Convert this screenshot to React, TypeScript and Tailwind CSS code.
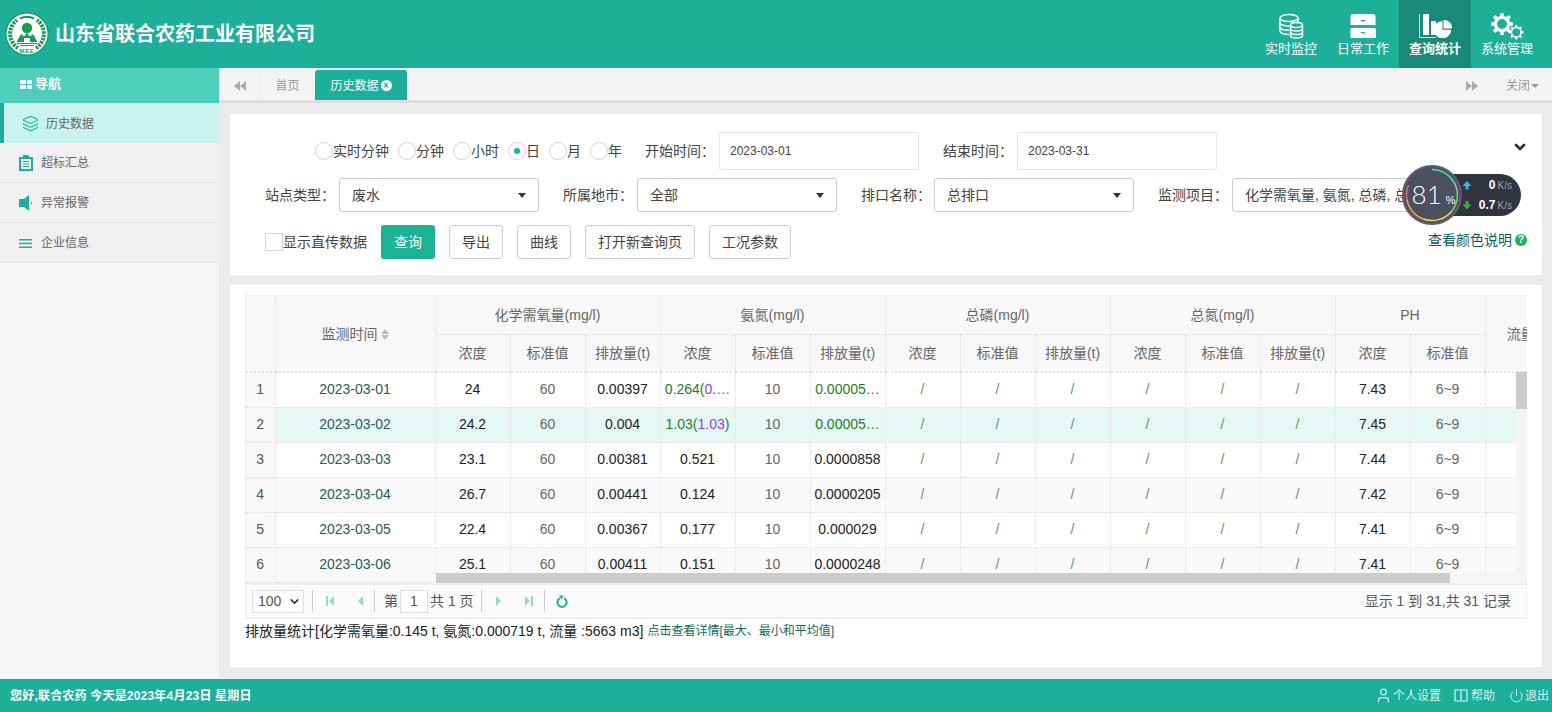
import React from 'react';
import { Layers, User, Power, ChevronDown } from 'lucide-react';

type Row = { no: number; date: string; cod: string; codOut: string; nh: React.ReactNode; nhOut: string; ph: string; stripe?: boolean; hover?: boolean };

const rows: Row[] = [
  { no: 1, date: '2023-03-01', cod: '24', codOut: '0.00397', nh: <><span className="text-[#1d801d]">0.264(</span><span className="text-[#8a3ff0]">0.…</span></>, nhOut: '0.00005…', ph: '7.43' },
  { no: 2, date: '2023-03-02', cod: '24.2', codOut: '0.004', nh: <><span className="text-[#1d801d]">1.03(</span><span className="text-[#8a3ff0]">1.03</span><span className="text-[#1d801d]">)</span></>, nhOut: '0.00005…', ph: '7.45', hover: true },
  { no: 3, date: '2023-03-03', cod: '23.1', codOut: '0.00381', nh: '0.521', nhOut: '0.0000858', ph: '7.44' },
  { no: 4, date: '2023-03-04', cod: '26.7', codOut: '0.00441', nh: '0.124', nhOut: '0.0000205', ph: '7.42', stripe: true },
  { no: 5, date: '2023-03-05', cod: '22.4', codOut: '0.00367', nh: '0.177', nhOut: '0.000029', ph: '7.41' },
  { no: 6, date: '2023-03-06', cod: '25.1', codOut: '0.00411', nh: '0.151', nhOut: '0.0000248', ph: '7.41', stripe: true },
];

const th = 'border-r border-b border-dotted border-[#dddddd] font-normal text-[#666] text-[14px] p-0 pt-[2px] whitespace-nowrap';
const thEnd = 'border-b-2 border-b-[#e5e5e5] border-b-solid';
const td = 'border-r border-b border-dotted border-[#dddddd] text-center text-[14px] p-0 h-[35px] whitespace-nowrap overflow-hidden';

const Logo = () => (
  <svg viewBox="0 0 44 44" className="w-11 h-11">
    <circle cx="22" cy="22" r="21.2" fill="#ffffff" stroke="#169c55" strokeWidth="1.4" />
    <g fill="none" stroke="#169c55" strokeWidth="4" strokeDasharray="2.4 1">
      <path d="M13 36 A17 17 0 0 1 12 8" />
      <path d="M31 36 A17 17 0 0 0 32 8" />
    </g>
    <path d="M15 6.5 A17 17 0 0 1 29 6.5" fill="none" stroke="#169c55" strokeWidth="2.2" />
    <circle cx="22" cy="16" r="5.2" fill="#169c55" />
    <path d="M11.5 30 L16 22 L19 24.5 L22 21 L25 24.5 L28 22 L32.5 30 Z" fill="#169c55" />
    <path d="M19 26 H25 V30 H19 Z" fill="#ffffff" />
    <path d="M12 31.5 H32 M15 33.5 H29" stroke="#169c55" strokeWidth="1" />
    <text x="22" y="41" textAnchor="middle" fontSize="6" fontWeight="700" letterSpacing="0.6" fontFamily="Liberation Sans" fill="#169c55">MEE</text>
  </svg>
);

const DbIcon = () => (
  <svg viewBox="0 0 26 26" className="w-[26px] h-[26px]" fill="none" stroke="#fff" strokeWidth="1.5">
    <ellipse cx="11" cy="5" rx="9" ry="3.5" />
    <path d="M2 5 V18 C2 20 6 21.5 11 21.5 M2 9.5 C2 11.5 6 13 12 13 M2 14 C2 16 6 17.2 11 17.2 M20 5 V9" />
    <ellipse cx="18.5" cy="12" rx="6" ry="2.5" fill="#1cb09a" />
    <path d="M12.5 12 V22 C12.5 24 15.5 25 18.5 25 S24.5 24 24.5 22 V12 M12.5 15.5 C12.5 17 15.5 18 18.5 18 S24.5 17 24.5 15.5 M12.5 19 C12.5 20.5 15.5 21.5 18.5 21.5 S24.5 20.5 24.5 19" />
  </svg>
);

const DrawerIcon = () => (
  <svg viewBox="0 0 26 24" className="w-[26px] h-6" fill="#fff">
    <path d="M3 0 H23 Q25.5 0 25.5 3 V11 H0.5 V3 Q0.5 0 3 0 Z" />
    <rect x="0.5" y="14" width="25.5" height="10" rx="1.5" />
    <rect x="11" y="6" width="4" height="1.4" fill="#1cb09a" />
    <rect x="11" y="18" width="4" height="1.4" fill="#1cb09a" />
  </svg>
);

const StatsIcon = () => (
  <svg viewBox="0 0 33 24" className="w-[33px] h-6" fill="#fff">
    <path d="M0.5 0 V23.5 H17" fill="none" stroke="#fff" strokeWidth="0.8" />
    <rect x="4" y="0" width="6" height="21" />
    <rect x="12" y="7" width="5" height="14" />
    <path d="M23.5 7 A8.7 8.7 0 1 0 32.2 15.7 H23.5 Z" />
    <path d="M24.5 6 A8 8 0 0 1 33 14.5 H24.5 Z" />
  </svg>
);

const gearPath = 'M9.5 0 H12.5 L13 3 L15.2 3.9 L17.7 2.1 L19.9 4.3 L18.1 6.8 L19 9 L22 9.5 V12.5 L19 13 L18.1 15.2 L19.9 17.7 L17.7 19.9 L15.2 18.1 L13 19 L12.5 22 H9.5 L9 19 L6.8 18.1 L4.3 19.9 L2.1 17.7 L3.9 15.2 L3 13 L0 12.5 V9.5 L3 9 L3.9 6.8 L2.1 4.3 L4.3 2.1 L6.8 3.9 L9 3 Z';

const GearsIcon = () => (
  <svg viewBox="0 0 33 27" className="w-[33px] h-[27px]">
    <path d={gearPath} fill="#fff" />
    <circle cx="11" cy="11" r="5" fill="#1cb09a" />
    <g transform="translate(18 12) scale(0.66)">
      <path d={gearPath} fill="#fff" />
      <circle cx="11" cy="11" r="6" fill="#1cb09a" />
    </g>
  </svg>
);

const nav = [
  { label: '实时监控', icon: <DbIcon /> },
  { label: '日常工作', icon: <DrawerIcon /> },
  { label: '查询统计', icon: <StatsIcon />, active: true },
  { label: '系统管理', icon: <GearsIcon /> },
];

const Caret = () => <span className="w-0 h-0 shrink-0 border-x-[4px] border-x-transparent border-t-[5px] border-t-[#333]" />;

const Radio = ({ label, on }: { label: string; on?: boolean }) => (
  <label className="flex items-center">
    <span className="w-[18px] h-[18px] rounded-full border border-[#d5d5d5] bg-white flex items-center justify-center">
      {on && <span className="w-[6px] h-[6px] rounded-full bg-[#17b3a3]" />}
    </span>
    <span>{label}</span>
  </label>
);

const Select = ({ value, width }: { value: string; width: string }) => (
  <div className={`h-[34px] bg-white border border-[#cccccc] rounded-[3px] pl-3 pr-3 flex items-center justify-between text-[14px] text-[#444] ${width}`}>
    <span className="whitespace-nowrap overflow-hidden">{value}</span>
    <Caret />
  </div>
);

const Btn = ({ children, primary }: { children: React.ReactNode; primary?: boolean }) => (
  <button className={`h-[34px] rounded-[3px] text-[14px] ${primary ? 'px-[13px] bg-[#1ab394] text-white' : 'px-[12px] bg-white border border-[#cccccc] text-[#444]'}`}>
    {children}
  </button>
);

const PagerIcon = ({ d }: { d: string }) => (
  <svg viewBox="0 0 12 14" className="w-3 h-[14px]" fill="#93d9cd"><path d={d} /></svg>
);

const Gauge = () => (
  <div className="absolute left-[1172px] top-[51px] w-[119px] h-[60px]">
    <div className="absolute right-0 top-[9px] w-[90px] h-[42px] rounded-[21px] bg-[#31343f] text-white">
      <svg viewBox="0 0 10 10" className="absolute left-[31px] top-[6px] w-[10px] h-[10px]" fill="#3db4ef"><path d="M5 1 L9.5 6 H6.5 V9.5 H3.5 V6 H0.5 Z" /></svg>
      <div className="absolute right-[9px] top-[3px] leading-[16px] flex items-baseline gap-[2px] text-[12px] font-bold">
        0<span className="text-[10px] font-normal text-[#a0a3ad]">K/s</span>
      </div>
      <svg viewBox="0 0 10 10" className="absolute left-[31px] top-[26px] w-[10px] h-[10px]" fill="#35b035"><path d="M5 9.5 L9.5 4.5 H6.5 V1 H3.5 V4.5 H0.5 Z" /></svg>
      <div className="absolute right-[9px] top-[23px] leading-[16px] flex items-baseline gap-[2px] text-[12px] font-bold">
        0.7<span className="text-[10px] font-normal text-[#a0a3ad]">K/s</span>
      </div>
    </div>
    <div className="absolute left-0 top-0 w-[60px] h-[60px] rounded-full bg-[#4c4f5d] border-[2px] border-[#5d606c] flex items-center justify-center text-white">
      <svg viewBox="0 0 56 56" className="absolute inset-0 w-full h-full" fill="none" strokeWidth="1.5">
        <path d="M28 2.5 A25.5 25.5 0 0 1 50 15.25" stroke="#3fd8c2" />
        <path d="M50 15.25 A25.5 25.5 0 0 1 47.5 44.4" stroke="#7ed67c" />
        <path d="M47.5 44.4 A25.5 25.5 0 0 1 19.3 52" stroke="#f0dc4e" />
        <path d="M19.3 52 A25.5 25.5 0 0 1 2.9 32.4" stroke="#f0a848" />
        <path d="M2.9 32.4 A25.5 25.5 0 0 1 4.5 18" stroke="#ee6a4e" />
      </svg>
      <span className="text-[26px] font-light leading-none font-['Lato'] ml-[3px] -mt-[3px]">81</span>
      <span className="text-[11px] mt-[10px] ml-[4px]">%</span>
    </div>
  </div>
);

const App = () => {
  return (
    <div className="h-[712px] w-[1552px] overflow-hidden flex flex-col bg-[#ebebed] font-['Liberation_Sans','Noto_Sans_CJK_SC',sans-serif] text-[14px] text-[#444]">
      {/* Header */}
      <header className="h-[68px] shrink-0 bg-[#1cb09a] flex items-center justify-between pl-[5px] pr-[9px]">
        <div className="flex items-center gap-[6px]">
          <Logo />
          <span className="text-white text-[20px] font-bold">山东省联合农药工业有限公司</span>
        </div>
        <nav className="flex h-full">
          {nav.map(n => (
            <div key={n.label} className={`w-[72px] h-full flex flex-col items-center pt-[12px] text-white text-[13px] leading-[18px] ${n.active ? 'bg-[#178a78] font-bold' : ''}`}>
              <div className="h-[28px] flex items-center justify-center">{n.icon}</div>
              <span>{n.label}</span>
            </div>
          ))}
        </nav>
      </header>

      <div className="flex-1 flex min-h-0">
        {/* Sidebar */}
        <aside className="w-[219px] shrink-0 bg-[#f6f6f6] flex flex-col">
          <div className="h-[35px] bg-[#4dcfbc] flex items-center pl-[20px] pb-[3px] gap-[3px] text-white font-bold text-[13px]">
            <span className="grid grid-cols-2 gap-[1px] w-[12px]">
              <i className="h-[4px] bg-white" /><i className="h-[4px] bg-white" /><i className="h-[4px] bg-white" /><i className="h-[4px] bg-white" />
            </span>
            导航
          </div>
          <div className="h-[40px] bg-[#c8f4ee] border-l-[4px] border-[#1cb09a] flex items-center pl-[18px] pt-[1px] gap-[7px] text-[#666] text-[12px]">
            <Layers size={17} strokeWidth={1.5} className="text-[#1cb09a]" />历史数据
          </div>
          <div className="h-[40px] bg-[#f0f0f0] border-b border-[#e8e8e8] flex items-center pl-[19px] pt-[1px] gap-[8px] text-[#666] text-[12px]">
            <svg viewBox="0 0 14 16" className="w-[14px] h-4"><path d="M0 2 H4 V0 H10 V2 H14 V16 H0 Z" fill="#1cb09a" /><path d="M2 4 H12 V14 H2 Z" fill="#f0f0f0" /><path d="M4 6 H10 V7 H4 Z M4 8.5 H10 V9.5 H4 Z M4 11 H10 V12 H4 Z" fill="#1cb09a" /></svg>
            超标汇总
          </div>
          <div className="h-[40px] bg-[#f0f0f0] border-b border-[#e8e8e8] flex items-center pl-[19px] pt-[1px] gap-[7px] text-[#666] text-[12px]">
            <svg viewBox="0 0 15 16" className="w-[15px] h-4" fill="#1cb09a"><path d="M0 4 H5 L10 0 V16 L5 12 H0 Z M12 6.5 C13.5 7 13.5 9 12 9.5 Z" /></svg>
            异常报警
          </div>
          <div className="h-[40px] bg-[#f0f0f0] border-b border-[#e8e8e8] flex items-center pl-[19px] pt-[1px] gap-[9px] text-[#666] text-[12px]">
            <svg viewBox="0 0 13 9" className="w-[13px] h-[9px]" fill="#1cb09a"><path d="M0 0 H13 V1.6 H0 Z M0 3.7 H13 V5.3 H0 Z M0 7.4 H13 V9 H0 Z" /></svg>
            企业信息
          </div>
        </aside>

        {/* Main */}
        <main className="flex-1 min-w-0 flex flex-col">
          <div className="h-[35px] shrink-0 bg-[#f3f3f4] border-b-[3px] border-[#dedede] ml-[1px] flex items-end text-[12px] text-[#999]">
            <div className="w-[40px] h-[32px] pt-[3px] flex items-center justify-center border-r border-[#ececec]">
              <svg viewBox="0 0 12 10" className="w-3 h-[10px]" fill="#aaa"><path d="M6 0 V10 L0 5 Z M12 0 V10 L6 5 Z" /></svg>
            </div>
            <div className="w-[55px] h-[32px] pt-[3px] flex items-center justify-center">首页</div>
            <div className="w-[92px] h-[30px] pt-[1px] bg-[#1cb09a] rounded-t-[3px] flex items-center justify-center gap-[2px] text-white">
              历史数据
              <span className="w-[11px] h-[11px] rounded-full bg-white text-[#1cb09a] text-[10px] leading-[10px] font-bold flex items-center justify-center">×</span>
            </div>
            <div className="ml-auto h-[32px] pt-[3px] flex items-center">
              <svg viewBox="0 0 12 10" className="w-3 h-[10px]" fill="#aaa"><path d="M0 0 V10 L6 5 Z M6 0 V10 L12 5 Z" /></svg>
              <span className="ml-[28px] mr-[1px]">关闭</span>
              <span className="w-0 h-0 mr-[13px] border-x-[4px] border-x-transparent border-t-[4px] border-t-[#999]" />
            </div>
          </div>

          <div className="flex-1 min-h-0 pl-[11px] pr-[10px] pt-[11px] pb-[12px] flex flex-col gap-[10px]">
            {/* Filters */}
            <section className="relative h-[161px] shrink-0 bg-white pl-[35px] pr-[15px] pt-[18px]">
              <div className="h-[38px] flex items-center">
                <div className="flex items-center gap-[9px] ml-[50px] w-[330px]">
                  <Radio label="实时分钟" />
                  <Radio label="分钟" />
                  <Radio label="小时" />
                  <Radio label="日" on />
                  <Radio label="月" />
                  <Radio label="年" />
                </div>
                <span className="w-[74px]">开始时间：</span>
                <div className="w-[200px] h-[38px] border border-[#e5e6e7] rounded-[2px] pl-[10px] flex items-center text-[12px]">2023-03-01</div>
                <span className="ml-[24px] w-[74px]">结束时间：</span>
                <div className="w-[200px] h-[38px] border border-[#e5e6e7] rounded-[2px] pl-[10px] flex items-center text-[12px]">2023-03-31</div>
              </div>
              <div className="h-[34px] mt-[8px] flex items-center">
                <span className="w-[74px]">站点类型：</span>
                <Select value="废水" width="w-[200px]" />
                <span className="ml-[24px] w-[74px]">所属地市：</span>
                <Select value="全部" width="w-[200px]" />
                <span className="ml-[24px] w-[73px]">排口名称：</span>
                <Select value="总排口" width="w-[200px]" />
                <span className="ml-[24px] w-[74px]">监测项目：</span>
                <Select value="化学需氧量, 氨氮, 总磷, 总氮" width="w-[200px]" />
              </div>
              <div className="h-[34px] mt-[13px] flex items-center gap-[14px]">
                <label className="flex items-center w-[102px]">
                  <span className="w-[18px] h-[18px] border border-[#d5d5d5] bg-white" />
                  <span>显示直传数据</span>
                </label>
                <Btn primary>查询</Btn>
                <Btn>导出</Btn>
                <Btn>曲线</Btn>
                <Btn>打开新查询页</Btn>
                <Btn>工况参数</Btn>
                <div className="ml-auto mb-[4px] flex items-center gap-[3px] text-[#0a5f5a]">
                  查看颜色说明
                  <span className="w-[12px] h-[12px] rounded-full bg-[#1fb25a] text-white text-[10px] font-bold leading-none flex items-center justify-center">?</span>
                </div>
              </div>
              <ChevronDown size={16} strokeWidth={4} className="absolute right-[14px] top-[25px] text-[#333]" />
              <Gauge />
            </section>

            {/* Data table */}
            <section className="flex-1 min-h-0 bg-white px-[15px] pt-[10px]">
              <div className="relative h-[288px] overflow-hidden border-t border-l border-[#eeeeee]">
                <table className="table-fixed border-collapse w-[1339px]">
                  <colgroup>
                    <col className="w-[29px]" />
                    <col className="w-[160px]" />
                    {Array.from({ length: 14 }).map((_, i) => <col key={i} className="w-[75px]" />)}
                    <col className="w-[100px]" />
                  </colgroup>
                  <thead className="bg-[#f8f8f8]">
                    <tr className="h-[38px]">
                      <th rowSpan={2} className={`${th} ${thEnd}`} />
                      <th rowSpan={2} className={`${th} ${thEnd}`}>
                        <span className="inline-flex items-center gap-[3px]">
                          监测时间
                          <span className="flex flex-col gap-[1px]">
                            <i className="w-0 h-0 border-x-[4px] border-x-transparent border-b-[5px] border-b-[#bbb]" />
                            <i className="w-0 h-0 border-x-[4px] border-x-transparent border-t-[5px] border-t-[#bbb]" />
                          </span>
                        </span>
                      </th>
                      <th colSpan={3} className={th}>化学需氧量(mg/l)</th>
                      <th colSpan={3} className={th}>氨氮(mg/l)</th>
                      <th colSpan={3} className={th}>总磷(mg/l)</th>
                      <th colSpan={3} className={th}>总氮(mg/l)</th>
                      <th colSpan={2} className={th}>PH</th>
                      <th rowSpan={2} className={`${th} ${thEnd}`}>流量(m3)</th>
                    </tr>
                    <tr className="h-[38px]">
                      {['a', 'b', 'c', 'd'].map(k => (
                        <React.Fragment key={k}>
                          <th className={`${th} ${thEnd}`}>浓度</th>
                          <th className={`${th} ${thEnd}`}>标准值</th>
                          <th className={`${th} ${thEnd}`}>排放量(t)</th>
                        </React.Fragment>
                      ))}
                      <th className={`${th} ${thEnd}`}>浓度</th>
                      <th className={`${th} ${thEnd}`}>标准值</th>
                    </tr>
                  </thead>
                  <tbody>
                    {rows.map(r => {
                      const bg = r.hover ? 'bg-[#e6f8f6]' : r.stripe ? 'bg-[#f9f9f9]' : 'bg-white';
                      return (
                        <tr key={r.no} className={bg}>
                          <td className={`${td} bg-[#f8f8f8] text-[#555]`}>{r.no}</td>
                          <td className={`${td} text-[#2b5b5b]`}>{r.date}</td>
                          <td className={`${td} text-[#222]`}>{r.cod}</td>
                          <td className={`${td} text-[#666]`}>60</td>
                          <td className={`${td} text-[#222]`}>{r.codOut}</td>
                          <td className={`${td} text-[#222]`}>{r.nh}</td>
                          <td className={`${td} text-[#666]`}>10</td>
                          <td className={`${td} ${r.nhOut.endsWith('…') ? 'text-[#1d801d]' : 'text-[#222]'}`}>{r.nhOut}</td>
                          {Array.from({ length: 6 }).map((_, i) => (
                            <td key={i} className={`${td} text-[#5a9a5a]`}>/</td>
                          ))}
                          <td className={`${td} text-[#222]`}>{r.ph}</td>
                          <td className={`${td} text-[#666]`}>6~9</td>
                          <td className={td} />
                        </tr>
                      );
                    })}
                  </tbody>
                </table>
                {/* scrollbars */}
                <div className="absolute right-0 top-[76px] bottom-0 w-[11px] bg-[#f5f5f5]">
                  <div className="h-[37px] bg-[#cccccc]" />
                </div>
                <div className="absolute left-[189px] right-[11px] bottom-0 h-[10px] bg-[#f5f5f5]">
                  <div className="ml-[1px] w-[1014px] h-full bg-[#cccccc]" />
                </div>
              </div>

              {/* Pager */}
              <div className="h-[36px] border-y-2 border-x border-[#eeeeee] bg-[#fbfbfb] flex items-center pl-[6px] pr-[15px] text-[#555]">
                <div className="w-[52px] h-[23px] bg-white border border-[#dddddd] pl-[5px] flex items-center justify-between pr-[2px]">
                  100 <ChevronDown size={13} strokeWidth={3} className="text-[#333]" />
                </div>
                <i className="w-px h-[22px] bg-[#cccccc] ml-[8px]" />
                <span className="ml-[11px]"><PagerIcon d="M2 2 H4 V12 H2 Z M10 2 V12 L5 7 Z" /></span>
                <span className="ml-[18px]"><PagerIcon d="M9 2 V12 L4 7 Z" /></span>
                <i className="w-px h-[22px] bg-[#cccccc] ml-[8px]" />
                <span className="ml-[9px]">第</span>
                <span className="ml-[2px] w-[28px] h-[23px] bg-white border border-[#dddddd] flex items-center justify-center">1</span>
                <span className="ml-[2px]">共 1 页</span>
                <i className="w-px h-[22px] bg-[#cccccc] ml-[7px]" />
                <span className="ml-[11px]"><PagerIcon d="M3 2 V12 L8 7 Z" /></span>
                <span className="ml-[18px]"><PagerIcon d="M2 2 V12 L7 7 Z M8 2 H10 V12 H8 Z" /></span>
                <i className="w-px h-[22px] bg-[#cccccc] ml-[9px]" />
                <svg viewBox="0 0 12 13" className="w-3 h-[13px] ml-[11px]" fill="none" stroke="#1cb09a" strokeWidth="2">
                  <path d="M4 3.2 A4.6 4.6 0 1 0 8 3.2" />
                  <path d="M3 0.5 L7.5 0.5 L5.5 4.5 Z" fill="#1cb09a" stroke="none" />
                </svg>
                <span className="ml-auto">显示 1 到 31,共 31 记录</span>
              </div>

              <div className="mt-[3px] flex items-center text-[#222] whitespace-nowrap h-[18px]">
                排放量统计[化学需氧量:0.145 t, 氨氮:0.000719 t, 流量 :5663 m3]
                <span className="ml-[4px] text-[12px] text-[#0a6a5a]">点击查看详情[最大、最小和平均值]</span>
              </div>
            </section>
          </div>
        </main>
      </div>

      {/* Footer */}
      <footer className="h-[33px] shrink-0 bg-[#1cb09a] flex items-center justify-between pl-[10px] pr-[3px] text-white text-[12px]">
        <span className="font-bold tracking-[0.2px]">您好,联合农药 今天是2023年4月23日 星期日</span>
        <div className="flex items-center text-[#d8f3ee]">
          <User size={17} strokeWidth={1.5} />
          <span className="ml-[1px]">个人设置</span>
          <svg viewBox="0 0 14 14" className="w-[14px] h-[14px] ml-[13px]" fill="none" stroke="currentColor" strokeWidth="1.2"><path d="M1 1 H13 V12 H1 Z M7 1 V12" /></svg>
          <span className="ml-[3px]">帮助</span>
          <Power size={15} strokeWidth={1.5} className="ml-[14px]" />
          <span className="ml-[1px]">退出</span>
        </div>
      </footer>
    </div>
  );
};

export default App;
